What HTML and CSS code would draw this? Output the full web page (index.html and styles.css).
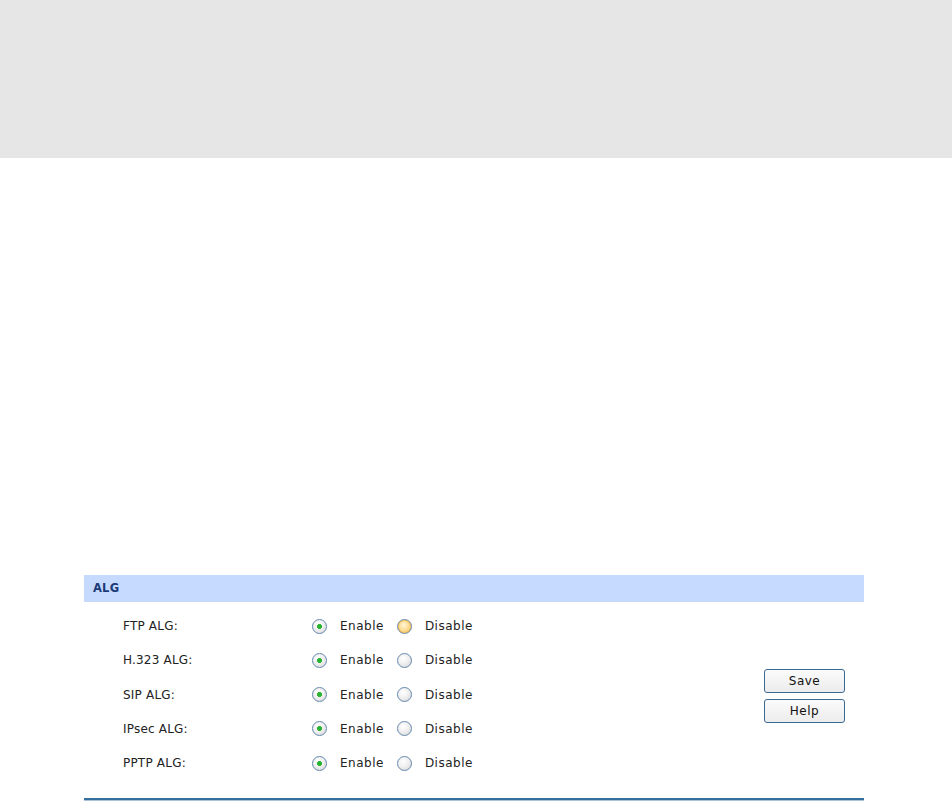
FILE: index.html
```html
<!DOCTYPE html>
<html lang="en">
<head>
    <meta charset="UTF-8">
    <title>ALG</title>
    <link rel="stylesheet" href="styles.css">
</head>
<body>
    <div class="top-band"></div>

    <div class="panel">
        <div class="panel-title">ALG</div>
        <div class="panel-body">
            <div class="rows">
                <div class="row">
                    <span class="label">FTP ALG:</span>
                    <span class="radio checked"></span><span class="opt">Enable</span>
                    <span class="radio hover"></span><span class="opt">Disable</span>
                </div>
                <div class="row">
                    <span class="label">H.323 ALG:</span>
                    <span class="radio checked"></span><span class="opt">Enable</span>
                    <span class="radio"></span><span class="opt">Disable</span>
                </div>
                <div class="row">
                    <span class="label">SIP ALG:</span>
                    <span class="radio checked"></span><span class="opt">Enable</span>
                    <span class="radio"></span><span class="opt">Disable</span>
                </div>
                <div class="row">
                    <span class="label">IPsec ALG:</span>
                    <span class="radio checked"></span><span class="opt">Enable</span>
                    <span class="radio"></span><span class="opt">Disable</span>
                </div>
                <div class="row">
                    <span class="label">PPTP ALG:</span>
                    <span class="radio checked"></span><span class="opt">Enable</span>
                    <span class="radio"></span><span class="opt">Disable</span>
                </div>
            </div>
            <div class="buttons">
                <button class="btn">Save</button>
                <button class="btn">Help</button>
            </div>
        </div>
        <div class="panel-foot"></div>
    </div>
</body>
</html>
```

FILE: styles.css
```css
* {
    margin: 0;
    padding: 0;
    box-sizing: border-box;
}

body {
    font-family: "DejaVu Sans", Verdana, sans-serif;
    font-size: 12px;
    color: #222;
    background: #fff;
}

.top-band {
    height: 158px;
    background-color: #e6e6e6;
}

.panel {
    width: 780px;
    margin: 417px 0 0 84px;
}

.panel-title {
    height: 27px;
    line-height: 27px;
    padding-left: 9px;
    background-color: #c6daff;
    color: #1c3a78;
    font-weight: bold;
    font-size: 11.5px;
    letter-spacing: 0.2px;
}

.panel-body {
    display: flex;
    padding-top: 7px;
}

.rows {
    flex: 1;
}

.row {
    display: flex;
    align-items: center;
    height: 34.25px;
    letter-spacing: 0.2px;
}

.label {
    width: 228px;
    padding-left: 39px;
}

.radio {
    width: 15px;
    height: 15px;
    border-radius: 50%;
    border: 1px solid #6488b0;
    background: radial-gradient(circle at 40% 35%, #ffffff 0%, #f0f0f0 45%, #d2d2d2 100%);
    margin-right: 13px;
    flex-shrink: 0;
}

.radio.checked {
    background:
        radial-gradient(circle, #29b533 0, #29b533 2.2px, transparent 2.8px),
        radial-gradient(circle at 40% 35%, #ffffff 0%, #f0f0f0 45%, #d2d2d2 100%);
}

.radio.hover {
    border-color: #6a86a8;
    background: radial-gradient(circle at 45% 40%, #fff6d8 0%, #fbd88a 55%, #f0b23a 100%);
    box-shadow: inset 0 0 0 1px #f7c75a;
}

.opt {
    margin-right: 13px;
    letter-spacing: 0.5px;
}

.buttons {
    width: 100px;
    display: flex;
    flex-direction: column;
    justify-content: center;
    gap: 6px;
    padding-top: 3px;
}

.btn {
    width: 81px;
    height: 24px;
    font-family: "DejaVu Sans", Verdana, sans-serif;
    font-size: 12px;
    letter-spacing: 0.5px;
    color: #111;
    border: 1px solid #3b6996;
    border-radius: 3px;
    background: linear-gradient(#fbfbfb, #ececec);
    cursor: pointer;
}

.panel-foot {
    margin-top: 18px;
    height: 3px;
    border-top: 2px solid #336e9c;
    border-bottom: 1px solid #a9c3da;
}
```
